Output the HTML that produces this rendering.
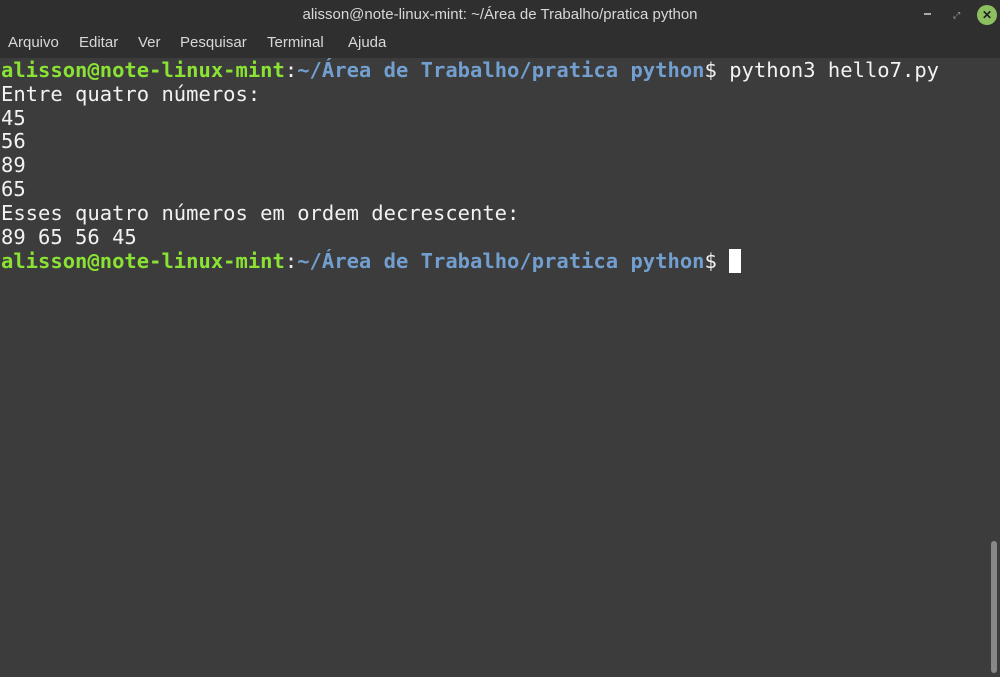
<!DOCTYPE html>
<html><head><style>
body{margin:0;width:1000px;height:677px;background:#3c3c3c;overflow:hidden;position:relative}
.title{position:absolute;left:0;top:0;width:1000px;height:30px;background:#2f2f2f;color:#d8d8d8;font:15px "Liberation Sans",sans-serif;text-align:center;line-height:29px}
.menu{position:absolute;left:0;top:30px;width:1000px;height:28px;background:#2f2f2f;color:#d8d8d8;font:15px "Liberation Sans",sans-serif;line-height:26px}
.menu span{position:absolute}
.term{position:absolute;left:1px;top:59px;font:20.5px "DejaVu Sans Mono",monospace;color:#f2f2f2;line-height:23.8px;white-space:pre}
.g{color:#8ae234;font-weight:bold}.b{color:#729fcf;font-weight:bold}
.cur{display:inline-block;width:12px;height:24px;background:#fff;vertical-align:-5px}
.sb{position:absolute;left:991px;top:541px;width:6px;height:132px;background:#888;border-radius:3px}
</style></head><body>
<div class="title">alisson@note-linux-mint: ~/Área de Trabalho/pratica python</div>
<div style="position:absolute;left:924px;top:13px;width:7px;height:2px;background:#aaa"></div>
<div style="position:absolute;left:953px;top:10px;color:#aaa;font:9px sans-serif">⤢</div>
<div style="position:absolute;left:977px;top:5px;width:20px;height:20px;border-radius:50%;background:#8bbf60;color:#222;font:bold 12px sans-serif;text-align:center;line-height:20px">✕</div>
<div class="menu"><span style="left:8px">Arquivo</span><span style="left:79px">Editar</span><span style="left:138px">Ver</span><span style="left:180px">Pesquisar</span><span style="left:267px">Terminal</span><span style="left:348px">Ajuda</span></div>
<div class="term"><span class="g">alisson@note-linux-mint</span>:<span class="b">~/Área de Trabalho/pratica python</span>$ python3 hello7.py
Entre quatro números:
45
56
89
65
Esses quatro números em ordem decrescente:
89 65 56 45
<span class="g">alisson@note-linux-mint</span>:<span class="b">~/Área de Trabalho/pratica python</span>$ <span class="cur"></span></div>
<div class="sb"></div>
</body></html>
